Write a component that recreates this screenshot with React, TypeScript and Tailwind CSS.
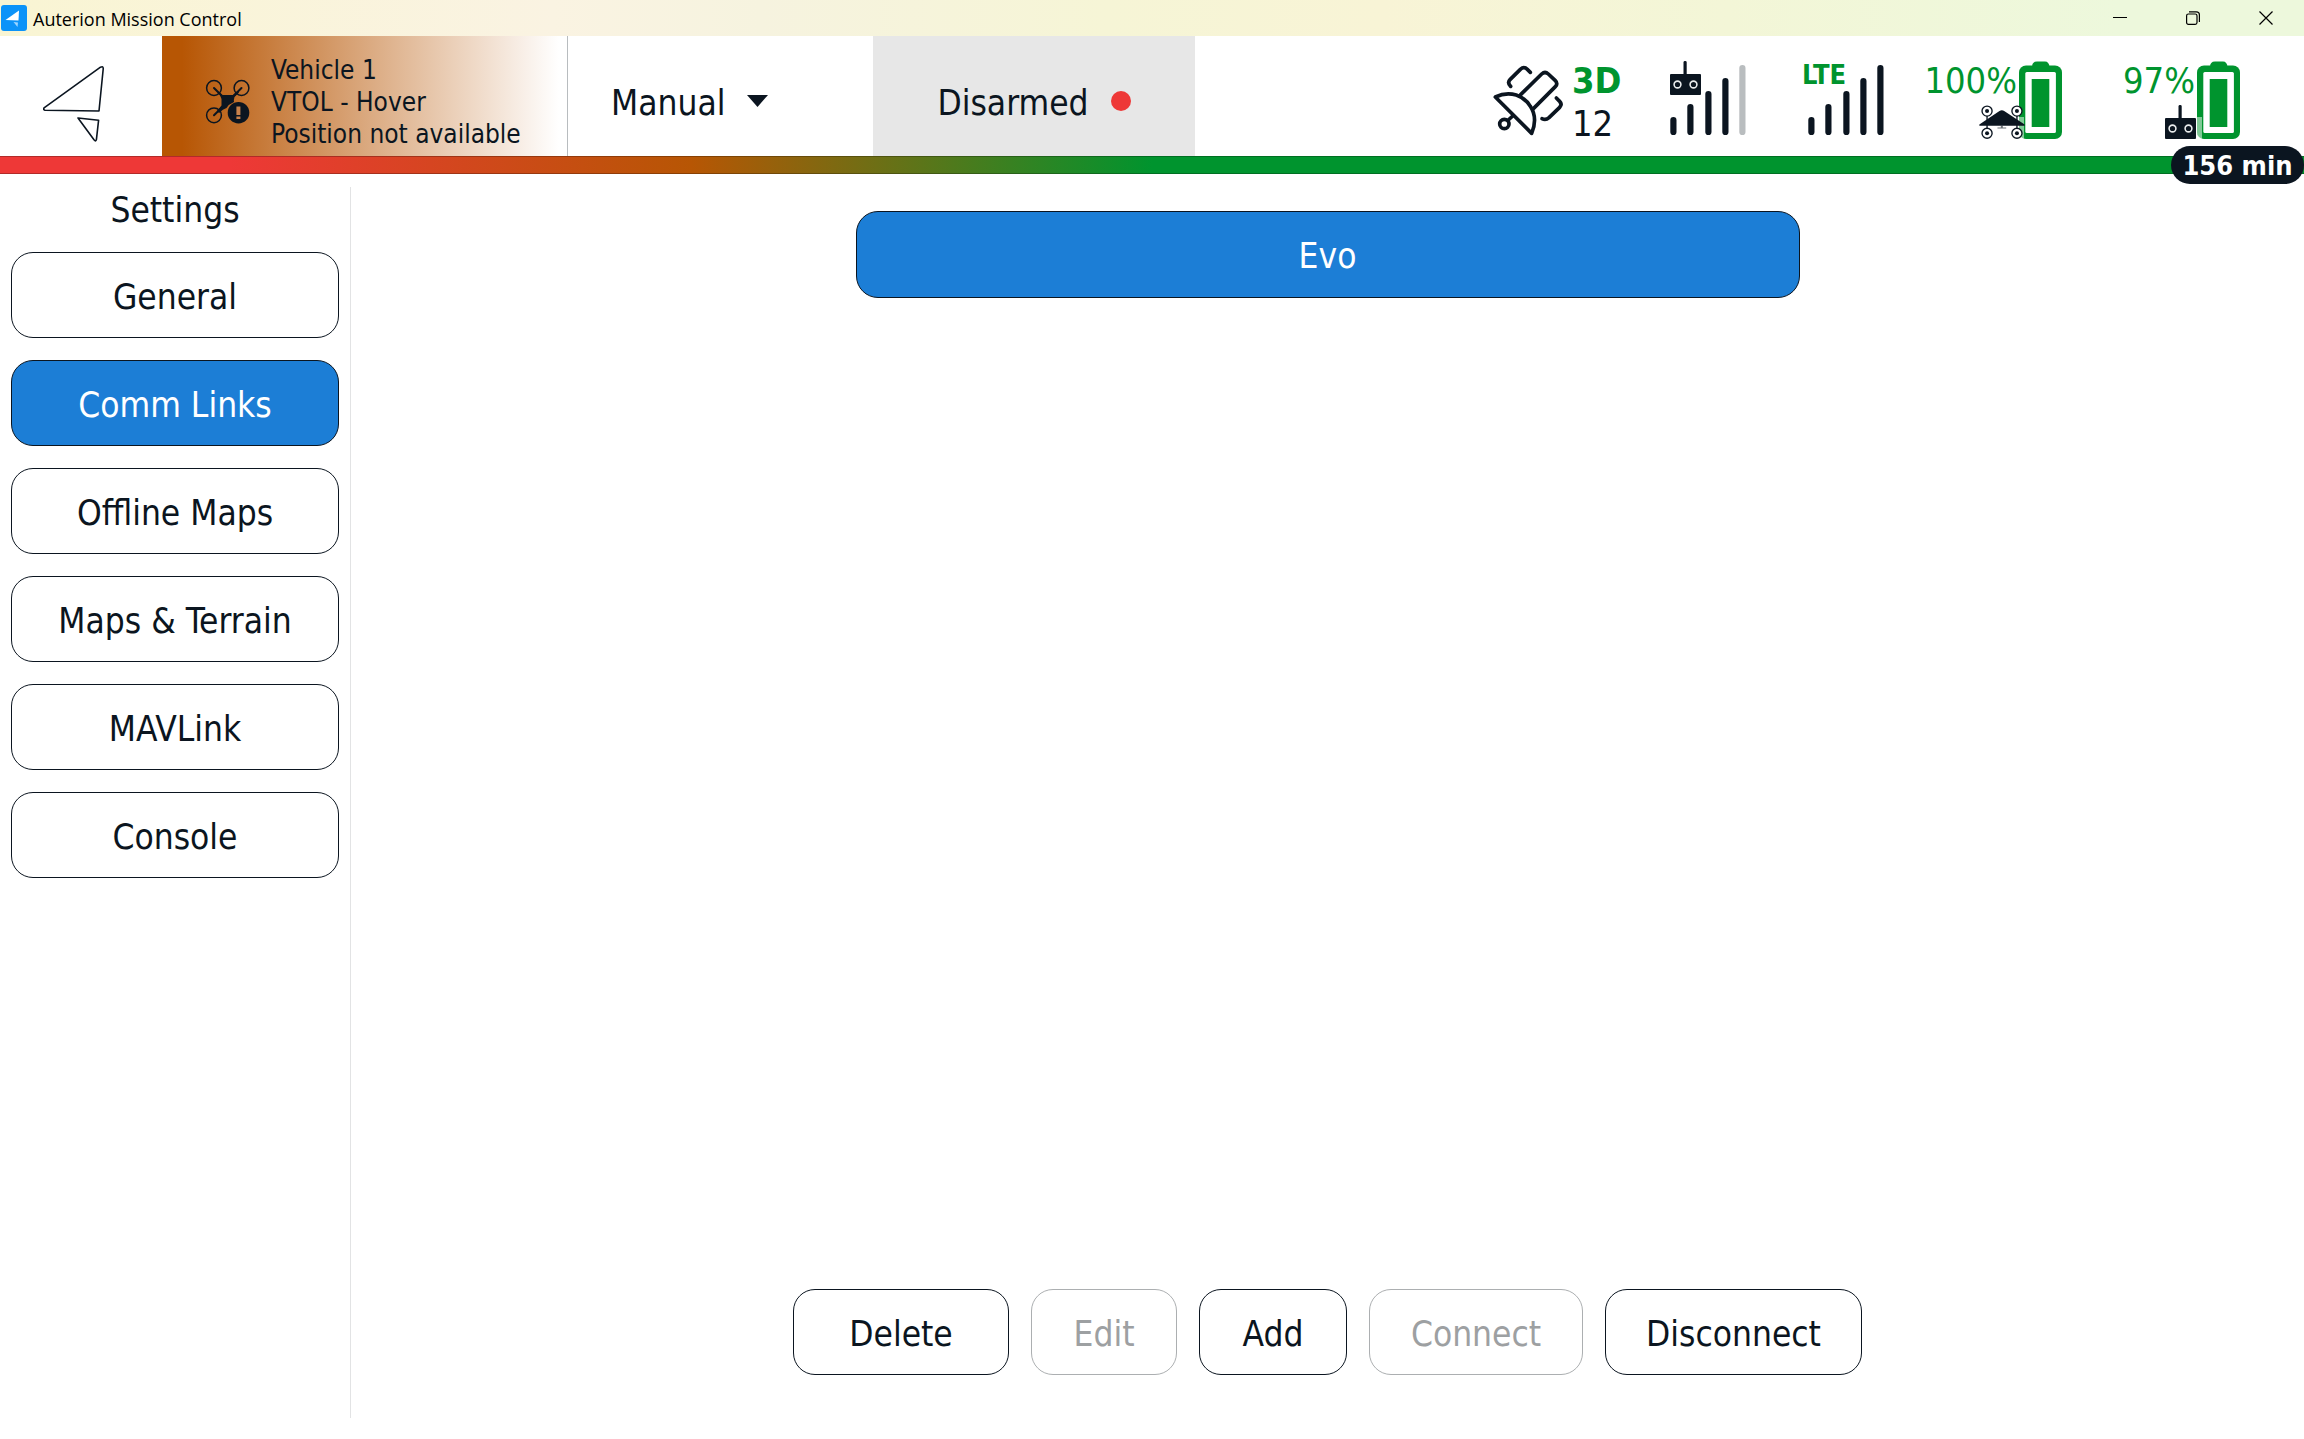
import React from "react";

const INK = "#0b1520";
const GREEN = "#00942e";

function AppIcon() {
  return (
    <svg width="26" height="26" viewBox="0 0 26 26" aria-hidden="true">
      <rect width="26" height="26" rx="3" fill="#0c93f8" />
      <path d="M18 5.5 L4.5 15 L17.5 15.5 Z" fill="#fff" />
      <path d="M12.5 17 L17 17.5 L16.5 22 Z" fill="#9fd6ff" />
    </svg>
  );
}

function BrandLogo() {
  return (
    <svg width="62" height="78" viewBox="0 0 62 78" fill="none" stroke={INK} strokeWidth="1.6" strokeLinejoin="round" aria-hidden="true">
      <path d="M57.5 2.2 Q60.4 0.6 60.2 4 L56 46 L2 45.2 Q-0.6 44.4 1.4 42.6 Z" />
      <path d="M35 53 L55.6 55.2 L53.4 74.6 Q52.8 77 51 74.8 Z" />
    </svg>
  );
}

function VehicleIcon() {
  return (
    <svg width="46" height="46" viewBox="0 0 46 46" fill="none" stroke={INK} aria-hidden="true">
      <g strokeWidth="1.5">
        <circle cx="9" cy="9" r="7.4" />
        <circle cx="36.5" cy="9" r="7.4" />
        <circle cx="9" cy="36.3" r="7.4" />
      </g>
      <path d="M9 9 L19 19 M36.5 9 L9 36.3" strokeWidth="2" strokeLinecap="round" />
      <path d="M13.5 12.5 L17.5 16 H28 L32.5 12 L34 13.5 L29.5 18 Q28.5 21 29 23 Q24 25 21.5 29 Q18 30 14 34 L12 32 L16.5 26.5 V20 Z" fill={INK} stroke="none" />
      <circle cx="33.5" cy="33.7" r="10.8" fill={INK} stroke="none" />
      <path d="M31.4 27.5 H35.4 V36 H31.4 Z M31.4 37.4 H35.4 V40 H31.4 Z" fill="#c9824b" stroke="none" />
    </svg>
  );
}

function SatelliteIcon() {
  return (
    <svg width="71" height="71" viewBox="98 104 213 213" fill="none" stroke={INK} strokeWidth="11" strokeLinecap="round" strokeLinejoin="round" aria-hidden="true">
      <path d="M105 200 C150 178 192 197 210 228 C226 252 226 280 214 309 Z" />
      <circle cx="132" cy="281" r="14" />
      <path d="M144 269 L157 257" />
      <path d="M181 193 L244 131 Q254 122 264 131 L285 151 Q294 160 285 169 L220 234" />
      <path d="M151 168 Q140 157 149 148 L180 117 Q191 107 201 117 L210 126" />
      <path d="M288 203 L298 213 Q307 222 298 231 L266 262 Q256 271 245 265" />
    </svg>
  );
}

const BARS = [
  { x: 0, y: 56 },
  { x: 17, y: 43 },
  { x: 35, y: 30 },
  { x: 52, y: 17 },
  { x: 69, y: 4 },
];

function SignalBars({ level }: { level: number }) {
  return (
    <svg width="76" height="74" viewBox="0 0 76 74" aria-hidden="true">
      {BARS.map((b, i) => (
        <rect key={b.x} x={b.x + 0.3} y={b.y} width="6.2" height={74 - b.y} rx="3.1" fill={i < level ? INK : "#b9bdbf"} />
      ))}
    </svg>
  );
}

function RemoteIcon({ className }: { className: string }) {
  return (
    <svg width="31" height="34" viewBox="0 0 31 34" className={className} aria-hidden="true">
      <rect x="13.5" y="0" width="3.2" height="16" rx="1.4" fill={INK} />
      <rect x="0" y="13" width="31" height="21" rx="1" fill={INK} />
      <g fill="none" stroke="#e8ebec" strokeWidth="1.6">
        <circle cx="7.5" cy="23.5" r="3.4" />
        <circle cx="23.5" cy="23.5" r="3.4" />
      </g>
    </svg>
  );
}

function DroneIcon({ className }: { className: string }) {
  return (
    <svg width="46" height="34" viewBox="655 226 137 101" className={className} aria-hidden="true">
      <g fill="#fff" stroke={INK} strokeWidth="4">
        <path d="M679 258 V296 M768 258 V296" />
        <circle cx="679" cy="244" r="15" />
        <circle cx="768" cy="244" r="15" />
        <circle cx="679" cy="310" r="15" />
        <circle cx="768" cy="310" r="15" />
      </g>
      <g fill={INK}>
        <circle cx="679" cy="244" r="6" />
        <circle cx="768" cy="244" r="6" />
        <circle cx="679" cy="310" r="6" />
        <circle cx="768" cy="310" r="6" />
        <path d="M656 288 V284 L716 244 Q723 239 730 244 L791 284 V288 Z" />
        <path d="M720 288 H726 V293 H736 V296 H710 V293 H720 Z" opacity="0.6" />
      </g>
    </svg>
  );
}

function BatteryIcon() {
  return (
    <svg width="43" height="78" viewBox="0 0 43 78" className="shrink-0" aria-hidden="true">
      <path d="M13 6 Q13 0.5 18 0.5 H26 Q30 0.5 30.5 6 Z" fill={GREEN} />
      <rect x="0" y="4.5" width="43" height="73.5" rx="7" fill={GREEN} />
      <rect x="6.3" y="11" width="30.6" height="61" rx="1.5" fill="#fff" />
      <rect x="12.7" y="18" width="17.6" height="48" fill={GREEN} />
      <path d="M0 56 H5 V78 H4 Q0 76 0 71 Z" fill="#fff" opacity="0.5" />
    </svg>
  );
}

function TitleBar() {
  const control = "flex h-9 w-[73px] items-center justify-center";
  return (
    <header className="flex h-9 items-center bg-[linear-gradient(90deg,#f9f5d3_0%,#faf3e2_24%,#f6f3df_33%,#f6f5d6_48%,#f8f4d6_60%,#f3f6d7_75%,#edf8dc_92%)] pr-0.5 pl-px">
      <AppIcon />
      <h1 className="ml-1.5 flex-1 pt-0.5 font-['Open_Sans','Noto_Sans',sans-serif] text-[18px] leading-6 text-black">Auterion Mission Control</h1>
      <button type="button" aria-label="Minimize" className={control}>
        <svg width="14" height="14" viewBox="0 0 14 14" stroke="#000" strokeWidth="1"><path d="M0 6.5 H14" /></svg>
      </button>
      <button type="button" aria-label="Restore" className={control}>
        <svg width="14" height="14" viewBox="0 0 14 14" fill="none" stroke="#000" strokeWidth="1.2">
          <rect x="0.6" y="3" width="10.4" height="10.4" rx="1.8" />
          <path d="M3 0.8 H10.4 Q13.4 0.8 13.4 3.8 V11" />
        </svg>
      </button>
      <button type="button" aria-label="Close" className={control}>
        <svg width="14" height="14" viewBox="0 0 14 14" stroke="#000" strokeWidth="1.2"><path d="M0.5 0.5 L13.5 13.5 M13.5 0.5 L0.5 13.5" /></svg>
      </button>
    </header>
  );
}

function StatusBar() {
  return (
    <div className="flex h-[120px]">
      <button type="button" aria-label="Main menu" className="flex w-[162px] items-center pt-4 pl-[43px]">
        <BrandLogo />
      </button>
      <button type="button" className="flex w-[406px] items-center gap-5 border-r border-[#b8bcbf] bg-[linear-gradient(90deg,#b75604_5%,#ffffff_98%)] pt-3 pl-[43px] text-left">
        <VehicleIcon />
        <span className="block text-[26px] leading-8 whitespace-nowrap">
          Vehicle 1<br />VTOL - Hover<br />Position not available
        </span>
      </button>
      <div className="relative w-[305px]">
        <select aria-label="Flight mode" defaultValue="Manual" className="h-full w-full appearance-none bg-white pt-[14px] pl-[43px] text-[35px]">
          <option>Manual</option>
        </select>
        <svg width="21" height="12" viewBox="0 0 21 12" className="pointer-events-none absolute top-[59px] left-[179px]" aria-hidden="true">
          <path d="M0 0 H21 L10.5 12 Z" fill={INK} />
        </svg>
      </div>
      <button type="button" className="flex w-[322px] items-center justify-center gap-[22px] bg-[#e7e7e7] pt-[14px] text-[35px]">
        Disarmed
        <span className="mb-[5px] size-5 rounded-full bg-[#ee3837]" />
      </button>

      <div className="ml-auto flex items-start gap-[42px] pt-[25px] pr-16">
        <div className="flex w-[135px] gap-2 pt-1">
          <SatelliteIcon />
          <div className="-mt-1.5 text-[36px] leading-[43px]">
            <div className="font-bold text-[#00942e]">3D</div>
            <div>12</div>
          </div>
        </div>
        <div className="relative w-[76px]" role="img" aria-label="Remote signal">
          <SignalBars level={4} />
          <RemoteIcon className="absolute top-0 left-0" />
        </div>
        <div className="relative flex w-24 justify-end">
          <span className="absolute top-0 left-[14px] text-[27px] leading-7 font-bold text-[#00942e]">LTE</span>
          <SignalBars level={5} />
        </div>
        <div className="relative flex w-[136px] justify-end text-[36px] leading-[44px] text-[#00942e]">
          <div className="-mt-0.5 mr-0.5">100%</div>
          <BatteryIcon />
          <DroneIcon className="absolute right-[37px] bottom-0" />
        </div>
        <div className="relative flex w-[136px] justify-end text-[36px] leading-[44px] text-[#00942e]">
          <div className="-mt-0.5 mr-0.5">97%</div>
          <BatteryIcon />
          <RemoteIcon className="absolute right-11 bottom-0" />
        </div>
      </div>
    </div>
  );
}

function FlightTimeBar() {
  return (
    <div className="relative h-[18px] bg-[linear-gradient(90deg,#ee3837_10%,#b75604_30%,#00942e_50%)]">
      <div className="h-full border-y border-black/25" />
      <div className="absolute -top-[10px] right-0 flex h-[38px] w-[133px] items-center justify-center rounded-full bg-[#0b1520] pt-0.5 text-[27px] font-bold text-white">
        156 min
      </div>
    </div>
  );
}

const SECTIONS = ["General", "Comm Links", "Offline Maps", "Maps & Terrain", "MAVLink", "Console"];

function Sidebar() {
  return (
    <nav aria-label="Settings" className="mt-[13px] mb-[21px] flex w-[351px] shrink-0 flex-col gap-[22px] border-r border-[#e2e3e4] px-[11px]">
      <h2 className="-mb-0.5 pt-0.5 text-center text-[35px] leading-[43px]">Settings</h2>
      {SECTIONS.map((name) => {
        const active = name === "Comm Links";
        return (
          <button
            key={name}
            type="button"
            aria-current={active ? "page" : undefined}
            className={
              active
                ? "h-[86px] rounded-[22px] border border-[#0b1520] bg-[#1c7ed6] pt-1 text-[35px] text-white"
                : "h-[86px] rounded-[22px] border border-[#0b1520] bg-white pt-1 text-[35px]"
            }
          >
            {name}
          </button>
        );
      })}
    </nav>
  );
}

const ACTIONS = [
  { name: "Delete", enabled: true, width: "w-[216px]" },
  { name: "Edit", enabled: false, width: "w-[146px]" },
  { name: "Add", enabled: true, width: "w-[148px]" },
  { name: "Connect", enabled: false, width: "w-[214px]" },
  { name: "Disconnect", enabled: true, width: "w-[257px]" },
];

function CommLinks() {
  return (
    <main className="flex flex-1 flex-col items-center px-6 pt-[37px] pb-16">
      <button type="button" className="h-[87px] w-full max-w-[944px] rounded-[22px] border border-[#0b1520] bg-[#1c7ed6] pt-1 text-[35px] text-white">
        Evo
      </button>
      <div className="mt-auto flex gap-[22px]">
        {ACTIONS.map((a) => (
          <button
            key={a.name}
            type="button"
            disabled={!a.enabled}
            className={`${a.width} h-[86px] rounded-[22px] border border-[#0b1520] bg-white pt-1 text-[35px] disabled:border-[#acafb1] disabled:text-[#9da0a2]`}
          >
            {a.name}
          </button>
        ))}
      </div>
    </main>
  );
}

export default function App() {
  return (
    <div className="flex min-h-screen flex-col bg-white font-['DejaVu_Sans_Condensed','Noto_Sans',sans-serif] text-[#0b1520]">
      <TitleBar />
      <StatusBar />
      <FlightTimeBar />
      <div className="flex flex-1">
        <Sidebar />
        <CommLinks />
      </div>
    </div>
  );
}
